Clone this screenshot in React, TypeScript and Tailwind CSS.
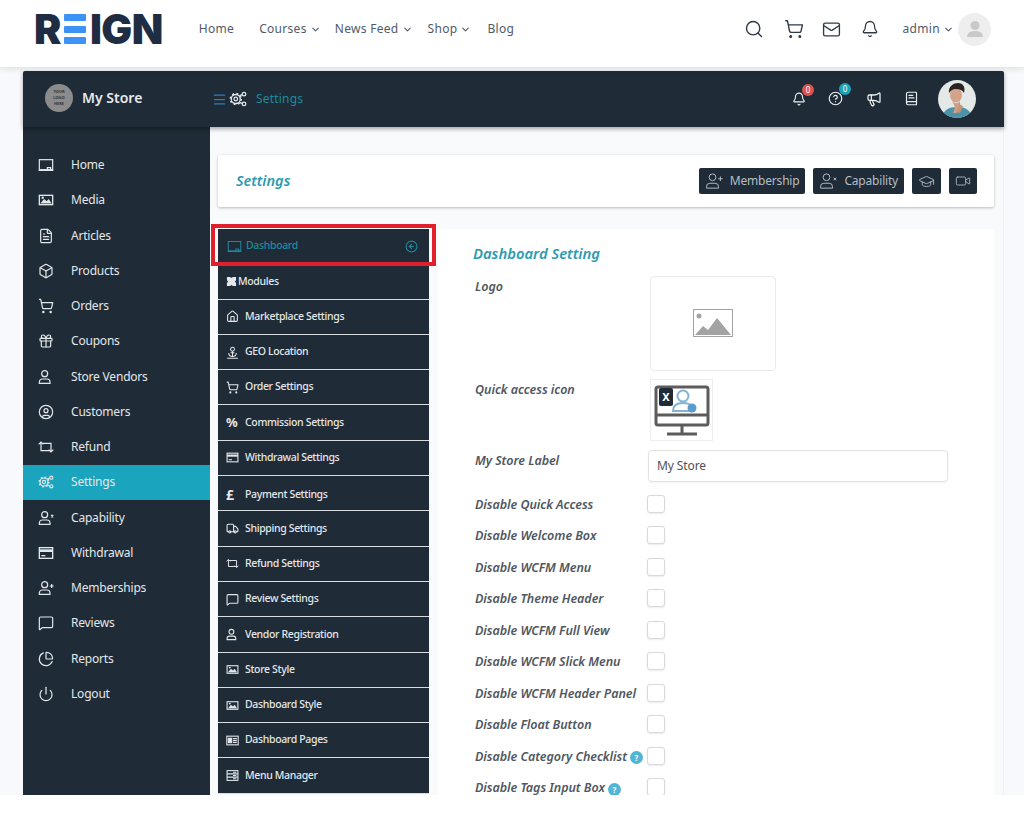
import React from "react";
import {
  Bell,
  Box,
  BookText,
  ChevronDown,
  CircleArrowLeft,
  CircleHelp,
  CircleUser,
  FileText,
  Gift,
  GraduationCap,
  House,
  Mail,
  Megaphone,
  Menu,
  MessageSquare,
  PieChart,
  Power,
  Search,
  ShoppingCart,
  Truck,
  Video,
} from "lucide-react";

type IconProps = { size?: number; className?: string; strokeWidth?: number };

function Board({ size = 18, className, strokeWidth = 1.6 }: IconProps) {
  return (
    <svg width={size} height={size} viewBox="0 0 24 24" fill="none" stroke="currentColor" strokeWidth={strokeWidth} className={className}>
      <rect x="2" y="4" width="20" height="15" />
      <path d="M1 20h22M14 19v-3h5v3" />
    </svg>
  );
}

function Gears({ size = 18, className }: IconProps) {
  return (
    <svg width={size} height={size} viewBox="0 0 24 24" fill="none" stroke="currentColor" strokeWidth={1.7} className={className}>
      <circle cx="9" cy="12" r="2.4" />
      <circle cx="9" cy="12" r="6" />
      <circle cx="9" cy="12" r="7" strokeDasharray="2.4 3.1" strokeWidth={2.6} />
      <circle cx="20" cy="5.5" r="2.4" />
      <circle cx="20" cy="18.5" r="2.4" />
      <path d="M14 7.5l3.6-1.4M14 16.5l3.6 1.4" />
    </svg>
  );
}

function Refund({ size = 18, className }: IconProps) {
  return (
    <svg width={size} height={size} viewBox="0 0 24 24" fill="none" stroke="currentColor" strokeWidth={1.8} className={className}>
      <path d="M1 8l3.500-3.500L8 8M4.500 5v12.500H18" />
      <path d="M23 16l-3.500 3.500L16 16M19.500 19V6.500H7" />
    </svg>
  );
}

function Puzzle({ size = 14, className }: IconProps) {
  return (
    <svg width={size} height={size} viewBox="0 0 24 24" fill="currentColor" className={className}>
      <path d="M2 2h7l3 2.500L15 2h7v7l-2.500 3L22 15v7h-7l-3-2.500L9 22H2v-7l2.500-3L2 9z" />
    </svg>
  );
}

function Geo({ size = 16, className }: IconProps) {
  return (
    <svg width={size} height={size} viewBox="0 0 24 24" fill="none" stroke="currentColor" strokeWidth={1.9} className={className}>
      <circle cx="12" cy="6" r="3.600" />
      <path d="M12 9.600V19M8.500 12.500h7M5 13c0 5 3 6.500 7 6.500s7-1.500 7-6.500M2 22.500h20" />
    </svg>
  );
}

function PagesIcon({ size = 16, className }: IconProps) {
  return (
    <svg width={size} height={size} viewBox="0 0 24 24" fill="none" stroke="currentColor" strokeWidth={2} className={className}>
      <rect x="1.500" y="4" width="21" height="16" />
      <rect x="4.500" y="8" width="6" height="8" fill="currentColor" />
      <path d="M13 8.500h7M13 12h7M13 15.500h7" />
    </svg>
  );
}

function ManagerIcon({ size = 16, className }: IconProps) {
  return (
    <svg width={size} height={size} viewBox="0 0 24 24" fill="none" stroke="currentColor" strokeWidth={2} className={className}>
      <rect x="2" y="3" width="20" height="18" />
      <path d="M2 9h20M2 15h20M13 6h6M13 12h6M13 18h6" />
    </svg>
  );
}

function Picture({ size = 16, className }: IconProps) {
  return (
    <svg width={size} height={size} viewBox="0 0 24 24" fill="none" stroke="currentColor" strokeWidth={2} className={className}>
      <rect x="2" y="5" width="20" height="14" />
      <path d="M4 17l5-6 4 3 3-3 4 6z" fill="currentColor" strokeWidth={0.5} />
      <circle cx="7" cy="8.500" r="0.800" fill="currentColor" />
    </svg>
  );
}

function Card({ size = 16, className }: IconProps) {
  return (
    <svg width={size} height={size} viewBox="0 0 24 24" fill="none" stroke="currentColor" strokeWidth={2} className={className}>
      <rect x="2" y="4" width="20" height="16" />
      <path d="M2 8.500h20" strokeWidth={4} />
      <path d="M5 16h6" />
    </svg>
  );
}

function Person({ size = 16, className, strokeWidth = 1.7, extra }: IconProps & { extra?: string }) {
  return (
    <svg width={size} height={size} viewBox="0 0 24 24" fill="none" stroke="currentColor" strokeWidth={strokeWidth} className={className}>
      <circle cx="10" cy="7" r="4.500" />
      <path d="M2 21.500v-2a4.500 4.500 0 0 1 4.500-4.500h7a4.500 4.500 0 0 1 4.500 4.500v2z" />
      {extra && <path d={extra} />}
    </svg>
  );
}

function UserCross(props: IconProps) {
  return <Person {...props} extra="M19.500 7.500l3.500 3.500M23 7.500L19.500 11" />;
}

function UserAdd(props: IconProps) {
  return <Person {...props} extra="M20.500 6v6M17.500 9h6" />;
}

function Pound({ className }: IconProps) {
  return <span className={`text-[14px] font-bold leading-none ${className ?? ""}`}>£</span>;
}

function PercentSign({ className }: IconProps) {
  return <span className={`text-[13px] font-bold leading-none ${className ?? ""}`}>%</span>;
}

const sideItems = [
  { label: "Home", icon: Board },
  { label: "Media", icon: Picture },
  { label: "Articles", icon: FileText },
  { label: "Products", icon: Box },
  { label: "Orders", icon: ShoppingCart },
  { label: "Coupons", icon: Gift },
  { label: "Store Vendors", icon: Person },
  { label: "Customers", icon: CircleUser },
  { label: "Refund", icon: Refund },
  { label: "Settings", icon: Gears, active: true },
  { label: "Capability", icon: UserCross },
  { label: "Withdrawal", icon: Card },
  { label: "Memberships", icon: UserAdd },
  { label: "Reviews", icon: MessageSquare },
  { label: "Reports", icon: PieChart },
  { label: "Logout", icon: Power },
];

const tabItems = [
  { label: "Marketplace Settings", icon: House },
  { label: "GEO Location", icon: Geo },
  { label: "Order Settings", icon: ShoppingCart },
  { label: "Commission Settings", icon: PercentSign },
  { label: "Withdrawal Settings", icon: Card },
  { label: "Payment Settings", icon: Pound, nudge: true },
  { label: "Shipping Settings", icon: Truck },
  { label: "Refund Settings", icon: Refund },
  { label: "Review Settings", icon: MessageSquare },
  { label: "Vendor Registration", icon: Person },
  { label: "Store Style", icon: Picture },
  { label: "Dashboard Style", icon: Picture },
  { label: "Dashboard Pages", icon: PagesIcon },
  { label: "Menu Manager", icon: ManagerIcon },
];

const checks = [
  { label: "Disable Quick Access" },
  { label: "Disable Welcome Box" },
  { label: "Disable WCFM Menu" },
  { label: "Disable Theme Header" },
  { label: "Disable WCFM Full View" },
  { label: "Disable WCFM Slick Menu" },
  { label: "Disable WCFM Header Panel" },
  { label: "Disable Float Button" },
  { label: "Disable Category Checklist", help: true },
  { label: "Disable Tags Input Box", help: true },
];

function Logo() {
  return (
    <div className="flex items-center text-[#1f2d44] font-black text-[41px] leading-none h-[30px] font-['Inter',sans-serif] tracking-[-0.5px]">
      <span>R</span>
      <div className="flex flex-col justify-between h-[30px] w-[22px] ml-[3px] mr-[4px]">
        <div className="h-[7px] bg-[#3d92f5] rounded-[1px]" />
        <div className="h-[7px] bg-[#3d92f5] rounded-[1px]" />
        <div className="h-[7px] bg-[#3d92f5] rounded-[1px]" />
      </div>
      <span>IGN</span>
    </div>
  );
}

function NavLink({ label, caret }: { label: string; caret?: boolean }) {
  return (
    <span className="flex items-center gap-[3px] text-[12px] tracking-[0.3px] text-[#505b68]">
      {label}
      {caret && <ChevronDown size={11} strokeWidth={2.4} />}
    </span>
  );
}

function TopNav() {
  return (
    <div className="h-[67px] shrink-0 bg-white flex items-center pl-[34px] pr-[33px] pb-[9px] shadow-[0_2px_6px_rgba(30,40,60,0.12)] relative z-10">
      <Logo />
      <div className="ml-[36px] flex items-center">
        <NavLink label="Home" />
        <span className="w-[25px]" />
        <NavLink label="Courses" caret />
        <span className="w-[14px]" />
        <NavLink label="News Feed" caret />
        <span className="w-[15px]" />
        <NavLink label="Shop" caret />
        <span className="w-[16px]" />
        <NavLink label="Blog" />
      </div>
      <div className="ml-auto flex items-center text-[#2e3a46]">
        <Search size={20} strokeWidth={1.7} />
        <ShoppingCart size={20} strokeWidth={1.7} className="ml-[20px]" />
        <Mail size={19} strokeWidth={1.7} className="ml-[18px]" />
        <Bell size={18} strokeWidth={1.7} className="ml-[20px]" />
        <span className="ml-[23px] mr-[3px] text-[12px] tracking-[0.35px] text-[#505b68]">admin</span>
        <ChevronDown size={11} strokeWidth={2.4} className="text-[#505b68]" />
        <div className="ml-[4px] w-[33px] h-[33px] rounded-full bg-[#eeeeee] flex items-center justify-center">
          <svg width="20" height="20" viewBox="0 0 20 20" fill="#c9c9c9">
            <circle cx="10" cy="6.500" r="4.500" />
            <path d="M2 18c0-4 3.500-6 8-6s8 2 8 6z" />
          </svg>
        </div>
      </div>
    </div>
  );
}

function Badge({ value, color }: { value: string; color: string }) {
  return (
    <span className={`absolute -top-[8px] -right-[8px] w-[12px] h-[12px] rounded-full text-white text-[8px] leading-[12px] text-center ${color}`}>
      {value}
    </span>
  );
}

function Portrait() {
  return (
    <svg width="38" height="38" viewBox="0 0 38 38" className="rounded-full">
      <rect width="38" height="38" fill="#e4e9e8" />
      <path d="M4 38c1-8 7-11 15-11s14 3 15 11z" fill="#4a93a8" />
      <ellipse cx="18" cy="15" rx="6" ry="7.500" fill="#d3a48a" />
      <path d="M11 13C10 6 16 3 20 3s8 3 6 10c-2-3-4-4-8-4s-5 2-7 4z" fill="#2b2320" />
      <path d="M14 21c3 3 6 3 8 0v6l-3 6h-4l2-6z" fill="#cf9f85" />
      <path d="M21 24l4 2-3 7-3-1z" fill="#c89378" />
    </svg>
  );
}

function Header() {
  return (
    <div className="h-[56px] shrink-0 bg-[#1f2b37] flex items-center rounded-t-[2px] shadow-[0_2px_4px_rgba(0,0,0,0.35)] relative z-[5]">
      <div className="w-[187px] shrink-0 flex items-center pl-[22px] pb-[3px]">
        <div className="w-[28px] h-[28px] rounded-full bg-[#8b8b8b] flex flex-col items-center justify-center gap-[1px]">
          <span className="text-[4px] leading-[5px] font-bold text-[#333]">YOUR</span>
          <span className="text-[4px] leading-[5px] font-bold text-[#333]">LOGO</span>
          <span className="text-[4px] leading-[5px] font-bold text-[#333]">HERE</span>
        </div>
        <span className="ml-[9px] text-[14px] font-semibold text-[#e6e9ec]">My Store</span>
      </div>
      <Menu size={15} className="ml-[2px] text-[#2a80b9]" />
      <Gears size={18} className="ml-[2px] text-[#e2e5e8]" />
      <span className="ml-[9px] text-[12px] tracking-[0.2px] text-[#1e8a9e]">Settings</span>
      <div className="ml-auto flex items-center pr-[28px] pb-[1px] text-[#eceff1]">
        <span className="relative">
          <Bell size={14} strokeWidth={1.9} />
          <Badge value="0" color="bg-[#e05252]" />
        </span>
        <span className="relative ml-[22px]">
          <CircleHelp size={15} strokeWidth={1.9} />
          <Badge value="0" color="bg-[#1aa3b8]" />
        </span>
        <Megaphone size={16} strokeWidth={1.9} className="ml-[23px]" />
        <BookText size={15} strokeWidth={1.9} className="ml-[22px]" />
        <div className="ml-[19px] flex">
          <Portrait />
        </div>
      </div>
    </div>
  );
}

function Sidebar() {
  return (
    <div className="w-[187px] shrink-0 bg-[#1f2b37] pt-[20.5px]">
      {sideItems.map((item) => {
        const Icon = item.icon;
        return (
          <div
            key={item.label}
            className={`h-[35.25px] flex items-center pl-[15px] text-[12px] tracking-[-0.2px] ${item.active ? "bg-[#1ba4bd]" : ""} text-[#e4e7ea]`}
          >
            <span className="w-[33px] flex">
              <Icon size={16} strokeWidth={1.8} />
            </span>
            {item.label}
          </div>
        );
      })}
    </div>
  );
}

function ActionButton({ children }: { children: React.ReactNode }) {
  return (
    <div className="h-[26px] rounded-[2px] bg-[#1f2b37] text-[#b5bdc4] flex items-center px-[6px] gap-[7px] text-[12px] tracking-[-0.2px]">
      {children}
    </div>
  );
}

function Tabs() {
  return (
    <div className="w-[211px] shrink-0 relative">
      <div className="h-[35.3px] pb-[1px] bg-[#1f2b37] flex items-center pl-[9px] pr-[11px] text-[#1e8a9e] text-[10.5px] font-medium tracking-[-0.35px]">
        <Board size={15} />
        <span className="ml-[4px]">Dashboard</span>
        <CircleArrowLeft size={13} className="ml-auto" />
      </div>
      <div className="h-[35.3px] bg-[#1f2b37] border-b border-[#d8dde2] flex items-center pl-[8px] text-[#e4e7ea] text-[10.5px] font-medium tracking-[-0.35px]">
        <Puzzle size={11} />
        <span className="ml-[1px]">Modules</span>
      </div>
      {tabItems.map((item) => {
        const Icon = item.icon;
        return (
          <div
            key={item.label}
            className={`h-[35.3px] bg-[#1f2b37] border-b border-[#d8dde2] flex items-center pl-[8px] text-[#e4e7ea] text-[10.5px] font-medium tracking-[-0.35px] ${item.nudge ? "pt-[3px]" : ""}`}
          >
            <span className="w-[19px] flex">
              <Icon size={13} strokeWidth={2} />
            </span>
            {item.label}
          </div>
        );
      })}
      {/* red marker drawn on top of the screenshot */}
      <div className="absolute -left-[7px] -top-[5px] w-[225px] h-[42px] border-[4px] border-[#e0202c]" />
    </div>
  );
}

function QuickIcon() {
  return (
    <div className="relative w-[63px] h-[62px] border border-[#eeeeee] bg-white flex items-center justify-center">
      <svg width="56" height="56" viewBox="0 0 56 56" fill="none">
        <rect x="2" y="5" width="52" height="38" rx="2" stroke="#5c5c5c" strokeWidth="3" />
        <path d="M2 33h52M28 43v8M13 52h30" stroke="#5c5c5c" strokeWidth="3" />
        <circle cx="29" cy="14" r="5.500" stroke="#82b3d6" strokeWidth="2" />
        <path d="M19 29c0-6 5-8 10-8s8 2 9 4v4z" stroke="#82b3d6" strokeWidth="2" />
        <circle cx="38" cy="26" r="4.500" fill="#5a9ccc" />
      </svg>
      <span className="absolute left-[8px] top-[8px] w-[14px] h-[18px] bg-[#1f2b37] rounded-[2px] text-white text-[11px] font-bold leading-[18px] text-center">
        X
      </span>
    </div>
  );
}

function FieldLabel({ children }: { children: React.ReactNode }) {
  return <span className="text-[12.5px] font-semibold italic text-[#50575f] tracking-[-0.05px]">{children}</span>;
}

function SettingsForm() {
  return (
    <div className="flex-1 bg-white ml-[9px] pl-[35px] pt-[14px]">
      <h2 className="text-[14.8px] leading-[20px] font-semibold italic text-[#2a9bb0]">Dashboard Setting</h2>
      <div className="flex mt-[13px] ml-[2px]">
        <div className="w-[175px] pt-[1px] leading-[16px]">
          <FieldLabel>Logo</FieldLabel>
        </div>
        <div className="w-[126px] h-[95px] rounded-[4px] border border-[#eaeaea] flex items-center justify-center">
          <svg width="40" height="30" viewBox="0 0 40 30">
            <rect x="0.500" y="0.500" width="39" height="27" fill="#fff" stroke="#a3a3a3" />
            <circle cx="6" cy="7" r="2.500" fill="#a3a3a3" />
            <path d="M2 26l8-9 5 4 9-12 14 17z" fill="#a3a3a3" />
          </svg>
        </div>
      </div>
      <div className="flex mt-[8px] ml-[2px]">
        <div className="w-[175px] pt-[1px] leading-[16px]">
          <FieldLabel>Quick access icon</FieldLabel>
        </div>
        <QuickIcon />
      </div>
      <div className="flex items-center mt-[9px] ml-[2px]">
        <div className="w-[173px] -mt-[14px]">
          <FieldLabel>My Store Label</FieldLabel>
        </div>
        <div className="w-[300px] h-[32px] border border-[#e2e2e2] rounded-[4px] flex items-center pl-[8px] text-[12px] tracking-[-0.1px] text-[#4b5259] shadow-[0_1px_2px_rgba(0,0,0,0.06)]">
          My Store
        </div>
      </div>
      <div className="mt-[6px] ml-[2px]">
        {checks.map((item) => (
          <div key={item.label} className="h-[31.5px] flex items-center">
            <div className="w-[172px] flex items-center pt-[3px]">
              <FieldLabel>{item.label}</FieldLabel>
              {item.help && (
                <span className="ml-[3px] mt-[1px] w-[13px] h-[13px] rounded-full bg-[#4fb6d8] text-white text-[8px] font-bold leading-[13px] text-center">
                  ?
                </span>
              )}
            </div>
            <div className="w-[18px] h-[18px] border border-[#d9d9d9] rounded-[3px] bg-white shadow-[0_1px_2px_rgba(0,0,0,0.08)]" />
          </div>
        ))}
      </div>
    </div>
  );
}

function Content() {
  return (
    <div className="flex-1 bg-[#f8fafc] pl-[8px] pr-[9px] pt-[28px] min-w-0 border-r border-[#eef0f3]">
      <div className="h-[52px] bg-white rounded-[2px] shadow-[0_1px_3px_rgba(0,0,0,0.25)] flex items-center pl-[18px] pr-[17px]">
        <span className="text-[14.5px] font-semibold italic text-[#2a9bb0]">Settings</span>
        <div className="ml-auto flex items-center gap-[8px]">
          <ActionButton>
            <UserAdd size={18} strokeWidth={1.3} />
            Membership
          </ActionButton>
          <ActionButton>
            <UserCross size={18} strokeWidth={1.3} />
            Capability
          </ActionButton>
          <ActionButton>
            <GraduationCap size={17} strokeWidth={1.3} />
          </ActionButton>
          <ActionButton>
            <Video size={16} strokeWidth={1.3} />
          </ActionButton>
        </div>
      </div>
      <div className="flex mt-[22px] bg-[#f8fafc]">
        <Tabs />
        <SettingsForm />
      </div>
    </div>
  );
}

export default function App() {
  return (
    <div className="h-[816px] w-[1024px] flex flex-col overflow-hidden bg-white font-['Noto_Sans',sans-serif]">
      <TopNav />
      <div className="h-[728px] shrink-0 overflow-hidden bg-[#f7f9fc] pt-[4px] pl-[23px] pr-[20px]">
        <Header />
        <div className="flex h-[700px]">
          <Sidebar />
          <Content />
        </div>
      </div>
    </div>
  );
}
